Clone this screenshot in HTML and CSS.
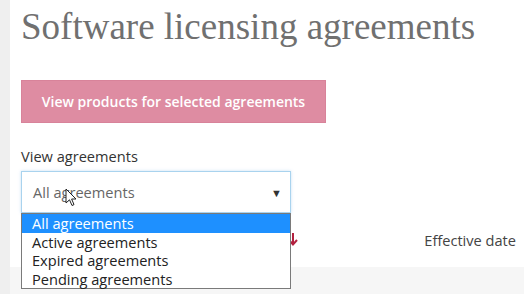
FILE: index.html
```html
<!DOCTYPE html>
<html lang="en">
<head>
    <meta charset="UTF-8">
    <title>Software licensing agreements</title>
    <link rel="stylesheet" href="styles.css">
</head>
<body>

<div class="page">
    <div class="side-strip"></div>
    <div class="content">
        <h1 class="page-title">Software licensing agreements</h1>

        <button class="products-btn">View products for selected agreements</button>

        <div class="filter-group">
            <label class="filter-label">View agreements</label>
            <div class="select-wrap">
                <div class="select-box">
                    <span class="select-value">All agreements</span>
                    <span class="select-caret">&#9660;</span>
                </div>
                <svg class="cursor" width="12" height="19" viewBox="0 0 12 19">
                    <path d="M1 1 L1 15 L4.5 11.8 L7 17.5 L9 16.6 L6.6 11 L11 11 Z" fill="#fff" stroke="#222" stroke-width="1"/>
                </svg>
                <ul class="select-list">
                    <li class="selected">All agreements</li>
                    <li>Active agreements</li>
                    <li>Expired agreements</li>
                    <li>Pending agreements</li>
                </ul>
            </div>
        </div>

        <div class="table-head">
            <svg class="sort-arrow" width="10" height="13" viewBox="0 0 10 13">
                <path d="M5 0 V11 M1 7 L5 11.5 L9 7" fill="none" stroke="#b3213f" stroke-width="2"/>
            </svg>
            <span class="col-date">Effective date</span>
        </div>
        <div class="table-row"></div>
    </div>
</div>

</body>
</html>
```

FILE: styles.css
```css
body {
    margin: 0;
    font-family: "Open Sans", Arial, sans-serif;
    background-color: #ffffff;
    overflow: hidden;
}
.page {
    display: flex;
    height: 294px;
}
.side-strip {
    width: 10px;
    background-color: #efefef;
    flex-shrink: 0;
}
.content {
    flex: 1;
    padding-left: 11px;
}
.page-title {
    margin: 4px 0 0 0;
    font-family: "Liberation Serif", serif;
    font-weight: normal;
    font-size: 37px;
    line-height: 46px;
    color: #707070;
    white-space: nowrap;
}
.products-btn {
    display: block;
    width: 305px;
    height: 43px;
    margin-top: 30px;
    border: 1px solid #d8839a;
    background-color: #de8ca2;
    color: #ffffff;
    font-family: "Open Sans", Arial, sans-serif;
    font-weight: 600;
    font-size: 14px;
    cursor: pointer;
}
.filter-group {
    margin-top: 23px;
}
.filter-label {
    display: block;
    font-size: 14.6px;
    color: #333333;
    line-height: 20px;
}
.select-wrap {
    position: relative;
    margin-top: 5px;
    width: 270px;
}
.select-box {
    display: flex;
    align-items: center;
    justify-content: space-between;
    height: 40px;
    padding: 0 8px 0 11px;
    border: 1px solid #a9d3ee;
    box-shadow: 0 0 3px rgba(120, 180, 230, 0.4);
    color: #666666;
    font-size: 14.6px;
}
.select-caret {
    font-size: 11px;
    color: #333333;
}
.cursor {
    position: absolute;
    left: 44px;
    top: 17px;
}
.select-list {
    position: absolute;
    top: 42px;
    left: 0;
    width: 268px;
    margin: 0;
    padding: 0;
    list-style: none;
    background-color: #ffffff;
    border: 1px solid #7a7a7a;
    z-index: 2;
}
.select-list li {
    height: 18.5px;
    line-height: 18.5px;
    padding-left: 10px;
    font-size: 14.6px;
    color: #222222;
}
.select-list li.selected {
    background-color: #1e90ff;
    color: #ffffff;
}
.table-head {
    display: flex;
    align-items: center;
    height: 54px;
    margin-left: -11px;
    position: relative;
}
.sort-arrow {
    position: absolute;
    left: 278px;
    top: 20px;
}
.col-date {
    margin-left: auto;
    margin-right: 8px;
    font-size: 14.6px;
    color: #444444;
}
.table-row {
    margin-left: -11px;
    height: 40px;
    background-color: #f6f6f6;
}
```
